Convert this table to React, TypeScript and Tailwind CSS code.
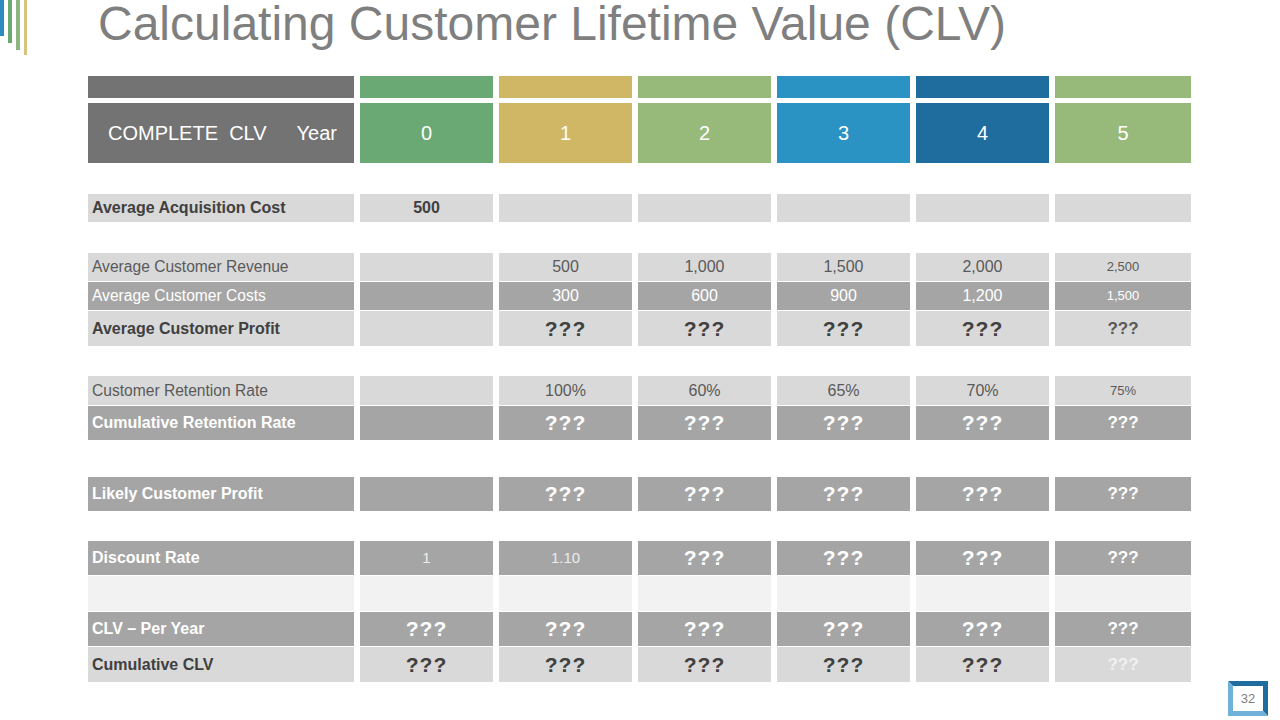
import React from "react";

type Tone = "light" | "mid" | "pale";

type Cell = { text?: string; kind?: "num" | "q" | "bold" | "small" | "qs" | "dim"; };

type Row = {
  label: string;
  bold?: boolean;
  tone: Tone;
  h: string;
  cells: Cell[];
};

const toneBg: Record<Tone, string> = {
  light: "bg-[#d9d9d9]",
  mid: "bg-[#a5a5a5]",
  pale: "bg-[#f2f2f2]",
};

const q: Cell = { text: "???", kind: "q" };
const qs: Cell = { text: "???", kind: "qs" };
const empty: Cell = {};

const groups: Row[][] = [
  [
    {
      label: "Average Acquisition Cost",
      bold: true,
      tone: "light",
      h: "h-[28px]",
      cells: [{ text: "500", kind: "bold" }, empty, empty, empty, empty, empty],
    },
  ],
  [
    {
      label: "Average Customer Revenue",
      tone: "light",
      h: "h-[28px]",
      cells: [
        empty,
        { text: "500", kind: "num" },
        { text: "1,000", kind: "num" },
        { text: "1,500", kind: "num" },
        { text: "2,000", kind: "num" },
        { text: "2,500", kind: "small" },
      ],
    },
    {
      label: "Average Customer Costs",
      tone: "mid",
      h: "h-[28px]",
      cells: [
        empty,
        { text: "300", kind: "num" },
        { text: "600", kind: "num" },
        { text: "900", kind: "num" },
        { text: "1,200", kind: "num" },
        { text: "1,500", kind: "small" },
      ],
    },
    {
      label: "Average Customer Profit",
      bold: true,
      tone: "light",
      h: "h-[35px]",
      cells: [empty, q, q, q, q, qs],
    },
  ],
  [
    {
      label: "Customer Retention Rate",
      tone: "light",
      h: "h-[29px]",
      cells: [
        empty,
        { text: "100%", kind: "num" },
        { text: "60%", kind: "num" },
        { text: "65%", kind: "num" },
        { text: "70%", kind: "num" },
        { text: "75%", kind: "small" },
      ],
    },
    {
      label: "Cumulative Retention Rate",
      bold: true,
      tone: "mid",
      h: "h-[34px]",
      cells: [empty, q, q, q, q, qs],
    },
  ],
  [
    {
      label: "Likely Customer Profit",
      bold: true,
      tone: "mid",
      h: "h-[34px]",
      cells: [empty, q, q, q, q, qs],
    },
  ],
  [
    {
      label: "Discount Rate",
      bold: true,
      tone: "mid",
      h: "h-[34px]",
      cells: [{ text: "1", kind: "dim" }, { text: "1.10", kind: "dim" }, q, q, q, qs],
    },
    {
      label: "",
      tone: "pale",
      h: "h-[35px]",
      cells: [empty, empty, empty, empty, empty, empty],
    },
    {
      label: "CLV – Per Year",
      bold: true,
      tone: "mid",
      h: "h-[34px]",
      cells: [q, q, q, q, q, qs],
    },
    {
      label: "Cumulative CLV",
      bold: true,
      tone: "light",
      h: "h-[35px]",
      cells: [q, q, q, q, q, { text: "???", kind: "qs" }],
    },
  ],
];

const groupGaps = ["mt-[31px]", "mt-[31px]", "mt-[30px]", "mt-[37px]", "mt-[30px]"];

const years = [
  { n: "0", bg: "bg-[#6aa874]" },
  { n: "1", bg: "bg-[#cfb765]" },
  { n: "2", bg: "bg-[#97ba7b]" },
  { n: "3", bg: "bg-[#2b93c3]" },
  { n: "4", bg: "bg-[#1f6c9f]" },
  { n: "5", bg: "bg-[#97ba7b]" },
];

const cols = "grid grid-cols-[266px_133px_133px_133px_133px_133px_136px] gap-x-[6px]";

function valueClass(cell: Cell, tone: Tone, last: boolean, lastRowLight: boolean) {
  const onMid = tone === "mid";
  switch (cell.kind) {
    case "bold":
      return "text-[16px] font-bold text-[#404040]";
    case "num":
      return `text-[16px] ${onMid ? "text-white" : "text-[#595959]"}`;
    case "small":
      return `text-[13px] ${onMid ? "text-white" : "text-[#595959]"}`;
    case "dim":
      return "text-[15px] text-[#ececec]";
    case "q":
      return `text-[21px] font-bold tracking-[1px] ${onMid ? "text-white" : "text-[#404040]"}`;
    case "qs":
      if (last && lastRowLight) return "text-[17px] font-bold text-[#f0f0f0]";
      return `text-[17px] font-bold ${onMid ? "text-white" : "text-[#595959]"}`;
    default:
      return "";
  }
}

function TableRow({ row, lastRow }: { row: Row; lastRow: boolean }) {
  const labelColor =
    row.tone === "mid" ? "text-white" : row.bold ? "text-[#404040]" : "text-[#595959]";
  return (
    <div className={cols}>
      <div
        className={`${toneBg[row.tone]} ${row.h} flex items-center pl-[4px] ${labelColor} ${
          row.bold ? "font-bold text-[16px]" : "text-[15.6px]"
        }`}
      >
        {row.label}
      </div>
      {row.cells.map((c, i) => (
        <div
          key={i}
          className={`${toneBg[row.tone]} ${row.h} flex items-center justify-center ${valueClass(
            c,
            row.tone,
            i === 5,
            lastRow
          )}`}
        >
          {c.text}
        </div>
      ))}
    </div>
  );
}

function PageNumber() {
  return (
    <div className="absolute left-[1228px] top-[681px] w-[40px] h-[35px]">
      <svg width="40" height="35" viewBox="0 0 40 35" className="absolute inset-0">
        <polygon points="0,0 40,0 40,35 35,30 35,5 5,5" fill="#1f6c9f" />
        <polygon points="0,0 5,5 5,30 35,30 40,35 0,35" fill="#6fb1d8" />
      </svg>
      <div className="absolute inset-0 flex items-center justify-center text-[13px] text-[#7f7f7f]">
        32
      </div>
    </div>
  );
}

export default function App() {
  return (
    <div
      className="relative w-[1280px] h-[720px] bg-white overflow-hidden"
      style={{ fontFamily: '"Liberation Sans", Arial, sans-serif' }}
    >
      {/* corner accent lines */}
      <div className="absolute left-0 top-0 flex gap-[4px] items-start">
        <div className="w-[4px] h-[36px] bg-[#2e8bc0]" />
        <div className="w-[4px] h-[43px] bg-[#6aa874]" />
        <div className="w-[4px] h-[50px] bg-[#8db580]" />
        <div className="w-[3px] h-[55px] bg-[#d6c47c]" />
      </div>

      <div className="pl-[88px]">
        <h1 className="h-[76px] pl-[10px] text-[48px] leading-[54px] -mt-[3px] text-[#7f7f7f]">
          Calculating Customer Lifetime Value (CLV)
        </h1>

        {/* header */}
        <div className={`${cols} mt-[3px]`}>
          <div className="h-[22px] bg-[#737373]" />
          {years.map((y) => (
            <div key={y.n} className={`h-[22px] ${y.bg}`} />
          ))}
        </div>
        <div className={`${cols} mt-[5px]`}>
          <div className="h-[60px] bg-[#737373] flex items-center pl-[20px] text-[20px] text-white">
            <span>COMPLETE&nbsp; CLV</span>
            <span className="ml-[30px]">Year</span>
          </div>
          {years.map((y) => (
            <div
              key={y.n}
              className={`h-[60px] ${y.bg} flex items-center justify-center text-[20px] text-white`}
            >
              {y.n}
            </div>
          ))}
        </div>

        {groups.map((g, gi) => (
          <div key={gi} className={`${groupGaps[gi]} flex flex-col gap-y-[1px]`}>
            {g.map((r, ri) => (
              <TableRow key={ri} row={r} lastRow={gi === groups.length - 1 && ri === g.length - 1} />
            ))}
          </div>
        ))}
      </div>

      <PageNumber />
    </div>
  );
}
